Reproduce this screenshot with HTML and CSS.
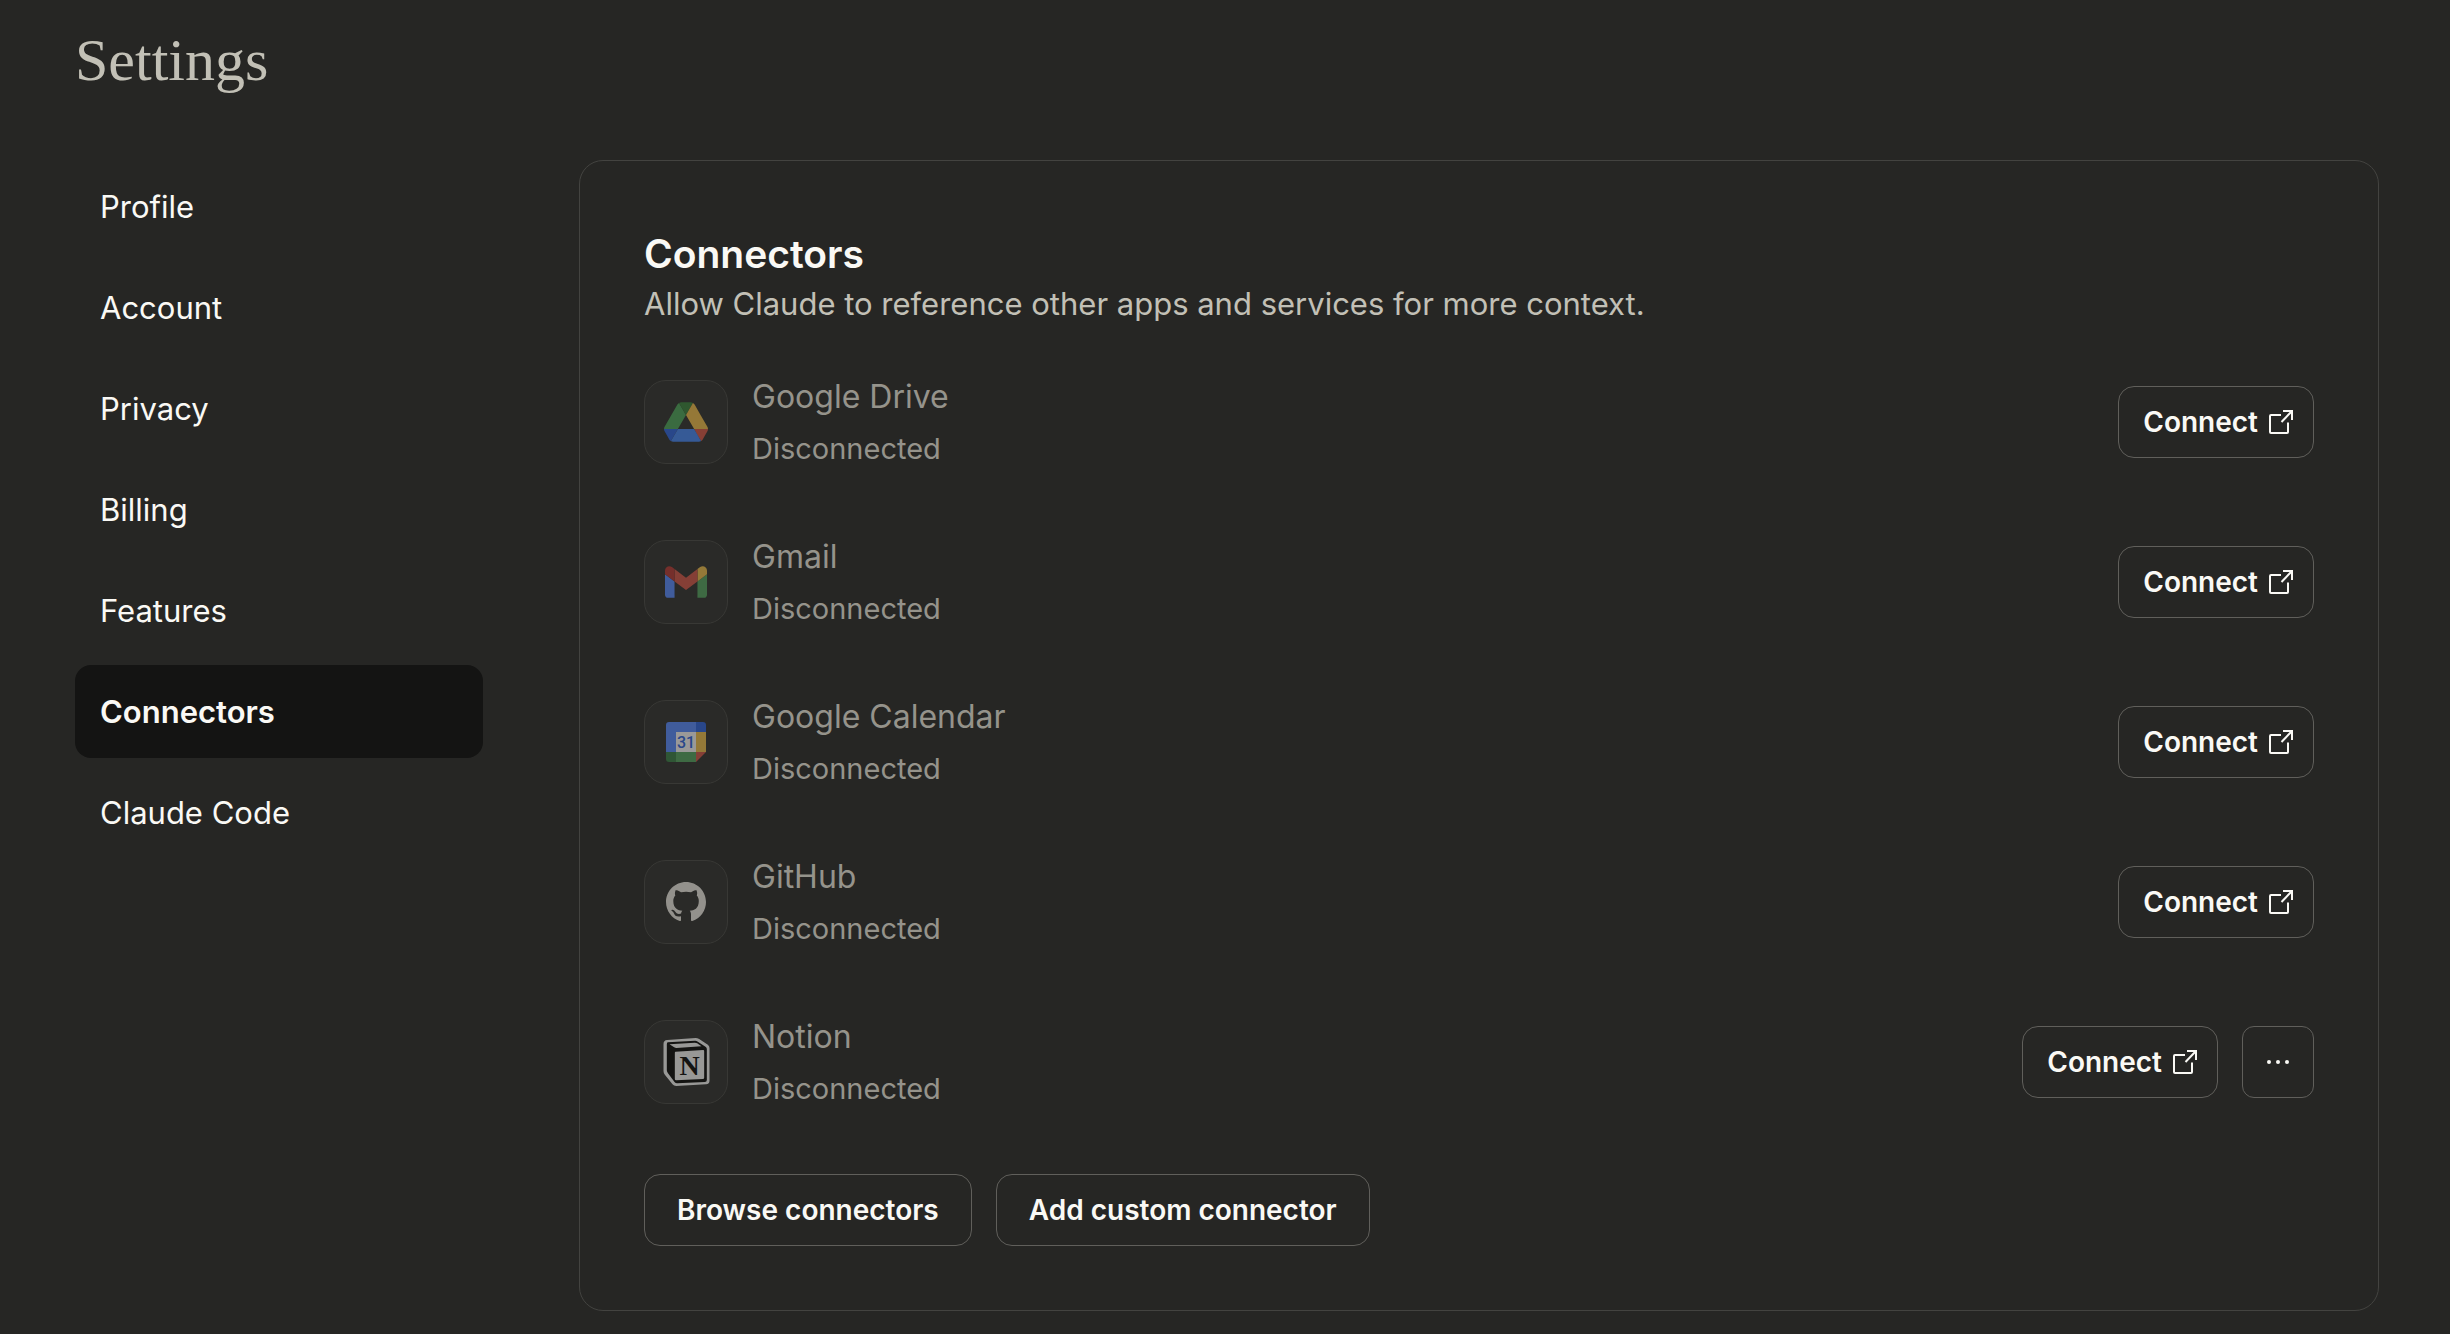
FILE: index.html
```html
<!DOCTYPE html>
<html lang="en">
<head>
<meta charset="utf-8">
<meta name="viewport" content="width=device-width, initial-scale=1">
<title>Settings</title>
<link rel="stylesheet" href="styles.css">
</head>
<body>
<svg class="sprite" aria-hidden="true">
  <symbol id="external" viewBox="0 0 24 24">
    <path d="M12 5H2a1 1 0 0 0-1 1v16a1 1 0 0 0 1 1h16a1 1 0 0 0 1-1v-9.500M12.500 12 22.500 1.500M14 1h9v9" fill="none" stroke="currentColor" stroke-width="2"/>
  </symbol>
</svg>
<div class="page">
  <header class="page-header">
    <h1 class="page-title">Settings</h1>
  </header>
  <div class="layout">
    <nav class="nav" aria-label="Settings">
      <a class="nav-item" href="#profile">Profile</a>
      <a class="nav-item" href="#account">Account</a>
      <a class="nav-item" href="#privacy">Privacy</a>
      <a class="nav-item" href="#billing">Billing</a>
      <a class="nav-item" href="#features">Features</a>
      <a class="nav-item nav-item-active" href="#connectors" aria-current="page">Connectors</a>
      <a class="nav-item" href="#claude-code">Claude Code</a>
    </nav>
    <main class="card">
      <h2 class="card-title">Connectors</h2>
      <p class="card-text">Allow Claude to reference other apps and services for more context.</p>
      <ul class="connectors">
        <li class="connector">
          <span class="tile">
            <svg width="44" height="40" viewBox="0 0 87.3 78" aria-hidden="true">
              <path d="m6.6 66.85 3.85 6.65c.8 1.4 1.95 2.5 3.3 3.3l13.75-23.8h-27.5c0 1.550.4 3.100 1.200 4.500z" fill="#29478a"/>
              <path d="m43.65 25-13.75-23.8c-1.35.8-2.5 1.9-3.3 3.3l-25.4 44a9.06 9.06 0 0 0 -1.2 4.5h27.5z" fill="#3a6b40"/>
              <path d="m73.55 76.8c1.35-.8 2.5-1.9 3.3-3.3l1.6-2.75 7.65-13.25c.8-1.4 1.2-2.95 1.2-4.5h-27.502l5.852 11.5z" fill="#873f35"/>
              <path d="m43.65 25 13.75-23.8c-1.35-.8-2.9-1.2-4.5-1.2h-18.5c-1.6 0-3.15.45-4.5 1.2z" fill="#2f582f"/>
              <path d="m59.8 53h-32.3l-13.75 23.8c1.35.8 2.9 1.2 4.5 1.2h50.8c1.6 0 3.15-.45 4.5-1.2z" fill="#365a96"/>
              <path d="m73.4 26.5-12.7-22c-.8-1.4-1.95-2.5-3.3-3.3l-13.75 23.8 16.15 28h27.45c0-1.55-.4-3.1-1.2-4.5z" fill="#957837"/>
            </svg>
          </span>
          <div class="info">
            <h3 class="name">Google Drive</h3>
            <p class="status">Disconnected</p>
          </div>
          <button class="button button-connect" type="button">Connect<svg class="external" aria-hidden="true"><use href="#external"/></svg></button>
        </li>
        <li class="connector">
          <span class="tile">
            <svg width="42" height="32" viewBox="52 42 88 66" aria-hidden="true">
              <path fill="#405c9c" d="M58 108h14V74L52 59v43c0 3.32 2.69 6 6 6"/>
              <path fill="#3e6a43" d="M120 108h14c3.32 0 6-2.69 6-6V59l-20 15"/>
              <path fill="#947938" d="M120 48v26l20-15v-8c0-7.42-8.47-11.65-14.4-7.2"/>
              <path fill="#853f36" d="M72 74V48l24 18 24-18v26L96 92"/>
              <path fill="#752f2b" d="M52 51v8l20 15V48l-5.6-4.2c-5.94-4.45-14.4-.22-14.4 7.2"/>
            </svg>
          </span>
          <div class="info">
            <h3 class="name">Gmail</h3>
            <p class="status">Disconnected</p>
          </div>
          <button class="button button-connect" type="button">Connect<svg class="external" aria-hidden="true"><use href="#external"/></svg></button>
        </li>
        <li class="connector">
          <span class="tile">
            <svg width="40" height="40" viewBox="0 0 40 40" aria-hidden="true">
              <path fill="#9a9998" d="M10 10h20v20H10z"/>
              <path fill="#405c9c" d="M30 0H3a3 3 0 0 0-3 3v27h10V10h20z"/>
              <path fill="#29478a" d="M30 0h7a3 3 0 0 1 3 3v7H30z"/>
              <path fill="#947938" d="M30 10h10v20H30z"/>
              <path fill="#3e6a43" d="M10 30h20v10H10z"/>
              <path fill="#2f5635" d="M0 30h10v10H3a3 3 0 0 1-3-3z"/>
              <path fill="#853f36" d="M30 30h10L30 40z"/>
              <text class="calendar-day" x="20" y="26" text-anchor="middle">31</text>
            </svg>
          </span>
          <div class="info">
            <h3 class="name">Google Calendar</h3>
            <p class="status">Disconnected</p>
          </div>
          <button class="button button-connect" type="button">Connect<svg class="external" aria-hidden="true"><use href="#external"/></svg></button>
        </li>
        <li class="connector">
          <span class="tile">
            <svg width="40" height="40" viewBox="0 0 16 16" aria-hidden="true">
              <path fill="#93918c" d="M8 0C3.58 0 0 3.58 0 8c0 3.54 2.29 6.53 5.47 7.59.4.07.55-.17.55-.38 0-.19-.01-.82-.01-1.49-2.01.37-2.53-.49-2.69-.94-.09-.23-.48-.94-.82-1.13-.28-.15-.68-.52-.01-.53.63-.01 1.08.58 1.23.82.72 1.21 1.87.87 2.33.66.07-.52.28-.87.51-1.07-1.78-.2-3.64-.89-3.64-3.95 0-.87.31-1.59.82-2.15-.08-.2-.36-1.02.08-2.12 0 0 .67-.21 2.2.82.64-.18 1.32-.27 2-.27.68 0 1.36.09 2 .27 1.53-1.04 2.2-.82 2.2-.82.44 1.1.16 1.92.08 2.12.51.56.82 1.27.82 2.15 0 3.07-1.87 3.75-3.65 3.95.29.25.54.73.54 1.48 0 1.07-.01 1.93-.01 2.2 0 .21.15.46.55.38A8.013 8.013 0 0 0 16 8c0-4.42-3.58-8-8-8z"/>
            </svg>
          </span>
          <div class="info">
            <h3 class="name">GitHub</h3>
            <p class="status">Disconnected</p>
          </div>
          <button class="button button-connect" type="button">Connect<svg class="external" aria-hidden="true"><use href="#external"/></svg></button>
        </li>
        <li class="connector">
          <span class="tile">
            <svg width="47" height="48" viewBox="98 84 140 144" aria-hidden="true">
              <path fill="#989896" d="M110 90 195 84q6 0 11 3l26 17q5 4 5 10v98q0 10-10 11l-90 5q-7 0-11-5l-23-29q-4-5-4-11V102q0-11 11-12z"/>
              <path fill="#141412" d="M112 97 194 92q4 0 8 3l23 15q4 3 4 7v93q0 6-6 6l-83 4q-5 0-8-4l-20-27q-3-4-3-8v-78q0-6 3-6z"/>
              <path fill="#989896" d="m117 103 76-5q4 0 7 2l13 9-75 5q-4 0-7-2z"/>
              <path fill="#989896" d="m135 125 83-5q3 0 3 3v80q0 4-4 4l-80 4q-4 0-4-4v-78q0-4 2-4z"/>
              <text class="notion-mark" x="177" y="194" text-anchor="middle">N</text>
            </svg>
          </span>
          <div class="info">
            <h3 class="name">Notion</h3>
            <p class="status">Disconnected</p>
          </div>
          <button class="button button-connect" type="button">Connect<svg class="external" aria-hidden="true"><use href="#external"/></svg></button>
          <button class="button button-more" type="button" aria-label="More options">
            <svg width="24" height="6" viewBox="0 0 24 6" fill="currentColor" aria-hidden="true">
              <circle cx="3" cy="3" r="2"/><circle cx="12" cy="3" r="2"/><circle cx="21" cy="3" r="2"/>
            </svg>
          </button>
        </li>
      </ul>
      <div class="actions">
        <button class="button" type="button">Browse connectors</button>
        <button class="button" type="button">Add custom connector</button>
      </div>
    </main>
  </div>
</div>
</body>
</html>
```
FILE: styles.css
```css
* {
  box-sizing: border-box;
}

body {
  margin: 0;
  background: #262624;
  color: #faf9f5;
  font-family: Inter, "Liberation Sans", sans-serif;
}

h1, h2, h3, p, ul {
  margin: 0;
  padding: 0;
  font-weight: 400;
}

.sprite {
  display: none;
}

.page {
  padding: 24px 71px 20px 75px;
}

.page-title {
  margin-bottom: 64px;
  color: #c2c0b6;
  font-family: "Liberation Serif", serif;
  font-size: 60px;
  line-height: 72px;
}

.layout {
  display: grid;
  grid-template-columns: 408px minmax(0, 1fr);
  gap: 96px;
  align-items: start;
}

.nav {
  display: flex;
  flex-direction: column;
  gap: 8px;
}

.nav-item {
  padding: 22px 25px;
  border-radius: 16px;
  color: inherit;
  font-size: 31px;
  line-height: 49px;
  text-decoration: none;
}

.nav-item-active {
  background: #141413;
  font-weight: 600;
}

.card {
  padding: 66px 64px 64px;
  border: 1px solid #434340;
  border-radius: 24px;
}

.card-title {
  font-size: 39px;
  font-weight: 600;
  line-height: 54px;
}

.card-text {
  color: #c2c0b6;
  font-size: 31px;
  line-height: 46px;
}

.connectors {
  display: flex;
  flex-direction: column;
  gap: 54px;
  margin: 42px 0 59px;
  list-style: none;
}

.connector {
  display: flex;
  align-items: center;
  gap: 24px;
  min-height: 106px;
}

.tile {
  display: flex;
  flex: none;
  align-items: center;
  justify-content: center;
  width: 84px;
  height: 84px;
  border: 1px solid #383835;
  border-radius: 22px;
  background: #2a2a28;
}

.info {
  display: flex;
  flex: 1;
  flex-direction: column;
  gap: 4px;
  padding-top: 2px;
  color: #95938b;
  line-height: 48px;
}

.name {
  font-size: 32px;
}

.status {
  font-size: 29px;
}

.calendar-day {
  fill: #29478a;
  font-family: Roboto, sans-serif;
  font-size: 16px;
  font-weight: 500;
}

.notion-mark {
  fill: #141412;
  font-family: "Liberation Serif", serif;
  font-size: 84px;
  font-weight: 700;
}

.actions {
  display: flex;
  gap: 24px;
}

.button {
  display: flex;
  align-items: center;
  justify-content: center;
  height: 72px;
  padding: 0 32px;
  border: 1px solid #605f5b;
  border-radius: 16px;
  background: transparent;
  color: #faf9f5;
  font-family: inherit;
  font-size: 28px;
  font-weight: 600;
}

.button-connect {
  gap: 11px;
  padding: 0 20px 0 24px;
}

.button-more {
  width: 72px;
  padding: 0;
  border-radius: 12px;
}

.external {
  width: 24px;
  height: 24px;
}
```
